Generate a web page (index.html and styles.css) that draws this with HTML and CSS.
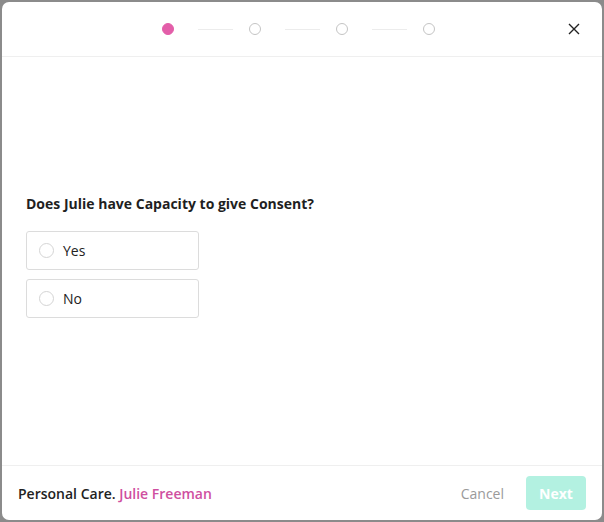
FILE: index.html
```html
<!DOCTYPE html>
<html>
<head>
<meta charset="utf-8">
<link rel="stylesheet" href="styles.css">
</head>
<body>
<div class="modal">
  <header class="modal-header">
    <div class="stepper">
      <span class="step active"></span>
      <span class="step-line"></span>
      <span class="step"></span>
      <span class="step-line"></span>
      <span class="step"></span>
      <span class="step-line"></span>
      <span class="step"></span>
    </div>
    <button class="close" aria-label="Close">
      <svg width="12" height="12" viewBox="0 0 12 12"><path d="M1 1 L11 11 M11 1 L1 11" stroke="#222" stroke-width="1.4" fill="none"/></svg>
    </button>
  </header>
  <main class="modal-body">
    <h2 class="question">Does Julie have Capacity to give Consent?</h2>
    <label class="option"><span class="radio"></span><span>Yes</span></label>
    <label class="option"><span class="radio"></span><span>No</span></label>
  </main>
  <footer class="modal-footer">
    <div class="crumb">Personal Care. <span class="name">Julie Freeman</span></div>
    <div class="actions">
      <button class="cancel">Cancel</button>
      <button class="next">Next</button>
    </div>
  </footer>
</div>
</body>
</html>
```
FILE: styles.css
```css
* { box-sizing: border-box; }
html, body { margin: 0; padding: 0; }
body {
  background: #8b8b8b;
  font-family: "Open Sans", "Noto Sans", sans-serif;
  color: #222;
  width: 604px;
  height: 522px;
  padding: 2px;
}
.modal {
  width: 600px;
  height: 518px;
  background: #fff;
  border-radius: 7px;
  display: flex;
  flex-direction: column;
  overflow: hidden;
}
.modal-header {
  height: 55px;
  border-bottom: 1px solid #efefef;
  display: flex;
  align-items: center;
  justify-content: center;
  position: relative;
  padding-right: 8px;
}
.stepper {
  display: flex;
  align-items: center;
}
.step {
  width: 12px;
  height: 12px;
  border-radius: 50%;
  border: 1px solid #c4c4c4;
  background: #fff;
}
.step.active {
  background: #e35ea9;
  border-color: #e35ea9;
}
.step-line {
  width: 35px;
  height: 1px;
  background: #ececec;
  margin: 0 16px 0 24px;
}
.close {
  position: absolute;
  right: 22px;
  top: 21px;
  width: 12px;
  height: 12px;
  padding: 0;
  border: 0;
  background: none;
  display: flex;
}
.modal-body {
  flex: 1;
  padding: 137px 24px 0 24px;
}
.question {
  margin: 0 0 17px 0;
  font-size: 14px;
  font-weight: 700;
  line-height: 20px;
  color: #1f1f1f;
}
.option {
  display: flex;
  align-items: center;
  width: 173px;
  height: 39px;
  border: 1px solid #dcdcdc;
  border-radius: 3px;
  padding-left: 12px;
  margin-bottom: 9px;
  font-size: 14px;
  color: #222;
}
.radio {
  width: 15px;
  height: 15px;
  border: 1px solid #d4d4d4;
  border-radius: 50%;
  margin-right: 9px;
}
.modal-footer {
  height: 55px;
  border-top: 1px solid #efefef;
  display: flex;
  align-items: center;
  justify-content: space-between;
  padding: 0 16px 0 16px;
}
.crumb {
  font-size: 14px;
  font-weight: 600;
  color: #222;
}
.crumb .name { color: #cf4fa0; }
.actions {
  display: flex;
  align-items: center;
  gap: 22px;
}
.cancel {
  border: 0;
  background: none;
  padding: 0;
  font-family: inherit;
  font-size: 14px;
  color: #9a9a9a;
}
.next {
  width: 60px;
  height: 34px;
  border: 0;
  border-radius: 4px;
  background: #b3f1e1;
  color: #fff;
  font-family: inherit;
  font-size: 14px;
  font-weight: 700;
}
```
